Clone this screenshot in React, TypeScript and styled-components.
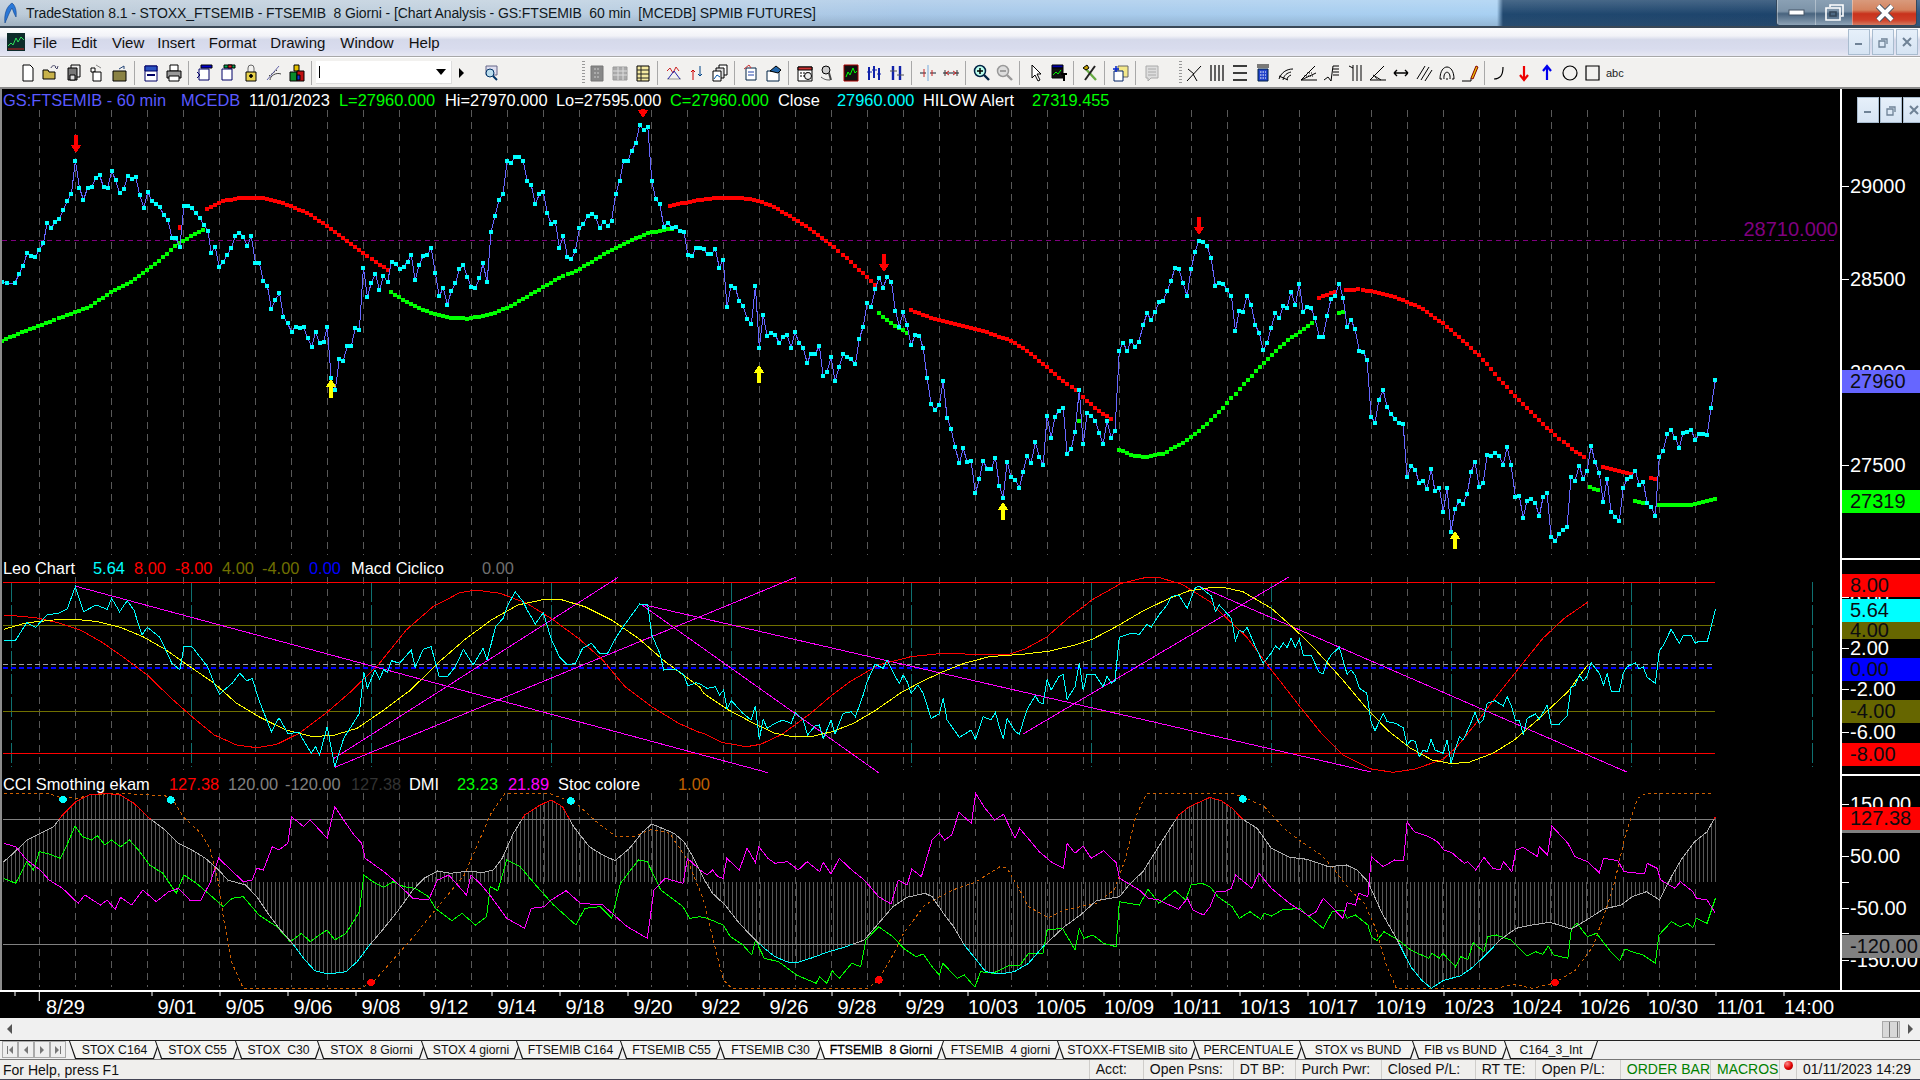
import React from 'react'
import styled, { createGlobalStyle } from 'styled-components'

type Pt = [number, number]

const FONT = `'Liberation Sans', Arial, sans-serif`

// points were read off crops of the chart, each crop has its own scale
const pts = (s: string, sx: number, ox: number, oy: number): Pt[] =>
  s.trim().split(/\s+/).map((p) => {
    const [x, y] = p.split(',').map(Number)
    return [ox + x / sx, oy + y / 3] as Pt
  })

const merge = (...parts: Pt[][]): Pt[] => {
  const out: Pt[] = []
  parts.forEach((part) => {
    part.forEach((p) => {
      if (!out.length || p[0] > out[out.length - 1][0]) out.push(p)
    })
  })
  return out
}

const A = (s: string) => pts(s, 2.24, 0, 100)
const B = (s: string) => pts(s, 2.8, 650, 100)
const C = (s: string) => pts(s, 2.8, 1200, 100)
const D = (s: string) => pts(s, 2.24, 0, 550)
const E = (s: string) => pts(s, 2.8, 650, 550)
const F = (s: string) => pts(s, 2.8, 1200, 550)

const poly = (p: Pt[]) => p.map(([x, y]) => `${x.toFixed(1)},${y.toFixed(1)}`).join(' ')

const yAt = (p: Pt[], x: number) => {
  if (x <= p[0][0]) return p[0][1]
  for (let i = 1; i < p.length; i++) {
    if (x <= p[i][0]) {
      const t = (x - p[i - 1][0]) / (p[i][0] - p[i - 1][0])
      return p[i - 1][1] + (p[i][1] - p[i - 1][1]) * t
    }
  }
  return p[p.length - 1][1]
}

const dots = (p: Pt[]): Pt[] => {
  const out: Pt[] = []
  for (let x = p[0][0]; x <= p[p.length - 1][0]; x += 4.02) out.push([x, yAt(p, x)])
  return out
}

const price = merge(
  A('5,545 15,550 33,550 43,522 52,497 61,458 70,468 79,470 88,450 97,430 106,368 115,385 124,365 133,357 142,330 151,302 160,282 169,182 178,264 187,300 196,264 205,262 214,235 223,226 232,262 241,264 250,214 259,240 268,280 277,268 286,228 295,238 304,230 313,285 322,323 331,275 340,302 349,312 358,322 367,345 376,360 385,413 394,414 403,440 412,317 421,317 430,325 439,340 448,355 457,375 466,392 473,460 482,440 491,500 500,485 509,465 518,445 527,408 536,398 545,410 554,438 563,408 572,488 581,490 590,542 599,558 608,627 617,600 626,580 635,650 644,670 653,695 662,680 671,685 680,680 689,715 698,740 707,697 716,730 725,727 733,680 742,835 751,870 760,776 769,783 778,737 787,738 796,683 805,690 814,503 823,590 832,548 841,522 850,570 859,527 868,547 877,485 886,492 895,507 904,500 913,485 921,465 930,540 939,495 948,467 957,465 966,443 975,520 984,588 993,563 1002,615 1011,573 1020,550 1029,508 1038,495 1047,530 1056,562 1065,565 1074,535 1082,490 1091,546 1100,395 1109,347 1118,300 1127,282 1136,182 1145,188 1154,170 1163,172 1172,183 1181,243 1190,255 1199,313 1208,283 1217,275 1226,340 1235,372 1244,365 1253,443 1262,407 1271,470 1280,478 1289,452 1298,385 1307,372 1316,347 1325,343 1334,350 1343,385 1352,365 1361,378 1370,362 1379,283 1388,243 1397,183 1406,183 1415,153 1424,130 1433,76 1442,90 1451,80 1460,243 1469,298 1478,312 1487,380 1496,368 1505,385 1514,380 1523,392 1532,396 1541,465 1550,468 1559,443 1568,443'),
  B('127,443 138,443 150,448 161,463 172,463 183,447 194,503 205,480 216,620 227,557 239,565 250,603 261,618 272,657 284,672 295,558 306,743 317,645 328,707 339,698 351,705 362,730 373,712 384,706 395,743 406,697 418,730 429,743 440,788 451,762 463,762 474,737 485,827 496,815 507,772 518,843 530,800 541,762 552,772 563,778 575,792 586,717 597,680 608,610 619,620 631,567 642,533 653,563 664,530 676,545 687,632 698,680 709,637 720,675 731,735 743,705 754,707 765,745 776,833 787,913 798,930 810,915 821,843 832,953 843,987 854,1040 866,1090 877,1045 888,1085 899,1082 911,1180 922,1138 933,1082 944,1106 955,1108 967,1073 978,1157 989,1193 1000,1085 1011,1132 1023,1140 1034,1163 1045,1115 1056,1067 1067,1088 1079,1027 1090,1070 1101,1095 1112,947 1123,1013 1134,950 1145,932 1157,923 1168,1062 1179,1047 1190,995 1202,870 1213,1032 1224,940 1235,947 1247,962 1258,1000 1269,1032 1280,962 1291,1013 1302,992 1314,753 1325,728 1336,753 1347,722 1358,741 1369,725 1381,675 1392,640 1403,660 1414,637 1425,607 1437,602 1448,573 1459,543 1470,503 1481,508 1492,548 1504,588 1515,507 1526,455 1537,422'),
  C('9,427 20,437 31,474 43,558 54,548 65,551 76,570 88,588 99,692 110,632 121,635 132,587 143,615 155,675 166,700 177,750 188,730 199,684 211,638 222,655 233,618 244,624 255,575 267,615 278,551 289,636 300,621 311,624 322,655 334,710 345,710 356,647 367,597 378,588 390,551 401,594 412,680 423,660 434,687 446,752 457,755 468,780 479,950 490,968 501,900 513,870 524,920 535,942 547,958 558,970 569,973 580,1132 591,1097 603,1110 614,1150 625,1143 636,1167 647,1108 658,1173 670,1163 681,1235 692,1163 703,1295 714,1227 726,1203 737,1212 748,1182 759,1116 770,1085 782,1162 793,1150 804,1065 815,1068 826,1058 838,1068 849,1095 860,1042 871,1095 883,1190 894,1188 905,1253 916,1202 927,1198 939,1210 950,1248 961,1190 972,1180 983,1310 995,1323 1006,1302 1017,1290 1028,1280 1039,1130 1050,1143 1062,1097 1073,1136 1084,1112 1095,1037 1106,1085 1118,1120 1129,1205 1140,1136 1151,1237 1163,1250 1174,1263 1185,1165 1196,1137 1207,1130 1219,1112 1230,1155 1241,1145 1252,1208 1263,1222 1275,1248 1286,1070 1297,1052 1308,1003 1319,990 1330,1013 1342,1043 1353,998 1364,995 1375,990 1387,1020 1398,1002 1409,1002 1420,1005 1431,923 1443,840'),
)

const greenDots: Pt[][] = [
  A('5,722 50,697 100,672 150,645 200,620 250,575 300,540 350,490 400,430 460,385'),
  A('875,577 910,605 950,632 1000,652 1050,656 1100,643 1150,615 1200,575 1250,537 1300,505 1350,465 1400,430 1450,400 1510,385'),
  B('640,640 680,675 722,700'),
  merge(B('1313,1049 1350,1066 1390,1072 1440,1060 1490,1030 1540,990 1568,965'), C('60,930 120,855 177,790 240,725 320,665')),
  C('388,640 402,635'),
  C('1093,1162 1120,1172'),
  C('1217,1203 1250,1210'),
  C('1285,1215 1370,1215 1400,1208 1445,1197'),
]

const redDots: Pt[][] = [
  A('463,326 500,302 545,293 590,295 640,312 690,340 735,380 780,425 830,475 870,512'),
  B('55,318 100,308 150,298 200,293 260,294 310,303 360,328 410,360 460,395 510,435 560,485 630,555'),
  B('730,630 790,655 860,675 930,692 1010,722 1060,755 1110,800 1160,845 1197,875'),
  B('1213,892 1260,935 1303,963'),
  C('333,594 380,575'),
  C('410,570 445,568 500,578 560,597 620,625 680,670 740,725 790,775 840,840 890,895 950,960 1000,1010 1050,1055 1085,1078'),
  C('1128,1100 1210,1122'),
  C('1262,1133 1275,1137'),
]

const signalArrows = [
  { x: 76, y1: 135, y2: 153, up: false },
  { x: 643, y1: 109, y2: 118, up: false },
  { x: 884, y1: 254, y2: 272, up: false },
  { x: 1199, y1: 217, y2: 235, up: false },
  { x: 331, y1: 379, y2: 398, up: true },
  { x: 759, y1: 365, y2: 383, up: true },
  { x: 1003, y1: 502, y2: 520, up: true },
  { x: 1455, y1: 531, y2: 549, up: true },
]

const macd = merge(
  D('8,271 35,271 60,218 80,232 105,195 130,190 150,178 169,110 187,185 215,165 240,178 250,145 268,185 285,152 300,180 318,255 330,232 358,262 385,340 403,360 412,290 430,290 465,350 480,400 492,432 520,400 537,370 553,392 565,385 580,450 608,545 625,503 645,550 670,548 697,610 707,590 716,615 733,530 750,650 770,565 805,490 815,365 823,415 840,360 850,388 860,358 868,368 877,332 895,340 921,300 930,352 948,298 966,290 984,380 1002,380 1020,350 1038,298 1060,345 1082,295 1091,330 1110,230 1127,205 1136,170 1154,125 1172,155 1181,180 1199,222 1217,188 1235,268 1253,320 1271,345 1289,340 1305,295 1325,280 1343,310 1361,310 1379,265 1397,228 1433,162 1451,165 1460,255 1478,310 1487,360 1514,358 1532,375 1541,408 1559,398 1568,402'),
  E('160,415 183,410 195,435 206,420 216,477 228,452 260,490 283,510 295,467 306,568 317,508 328,535 350,520 372,510 395,520 407,488 429,510 441,555 463,527 474,525 485,565 507,510 518,552 541,490 563,485 575,500 597,435 608,395 630,343 653,355 664,330 687,380 698,400 709,375 720,395 731,430 750,405 765,430 787,505 810,492 821,445 832,510 866,562 888,548 899,540 911,568 933,500 955,510 967,487 978,530 989,567 1000,505 1023,545 1034,553 1056,478 1079,437 1090,458 1101,460 1112,388 1123,420 1145,380 1157,373 1168,448 1190,410 1202,340 1213,420 1224,372 1247,375 1269,410 1280,378 1291,400 1302,392 1314,262 1325,258 1347,250 1370,253 1392,222 1403,232 1425,195 1448,165 1459,140 1481,135 1504,175 1526,115 1537,108 1568,135'),
  F('31,135 43,185 54,165 88,205 99,273 110,240 121,247 132,232 155,290 177,340 199,310 211,288 222,298 233,278 244,293 255,265 267,292 278,268 289,315 311,315 334,368 345,370 356,335 367,315 390,292 412,373 423,360 434,375 446,415 467,430 479,515 490,542 513,490 524,515 547,520 569,533 580,585 591,570 603,575 614,620 625,600 636,605 647,568 658,600 681,610 692,570 703,640 714,600 726,560 737,570 759,517 770,487 782,522 793,510 804,460 826,452 849,468 860,440 871,465 883,510 894,510 905,552 916,505 939,492 950,508 972,465 983,522 1006,522 1028,497 1039,410 1050,407 1062,375 1073,393 1084,378 1095,338 1118,370 1130,405 1140,370 1152,425 1174,425 1185,370 1196,350 1219,338 1230,357 1241,350 1252,382 1275,400 1286,303 1297,287 1319,238 1342,280 1353,258 1375,257 1387,280 1398,273 1420,276 1431,230 1443,178'),
)

const macdYellow = merge(
  D('8,238 60,218 120,210 170,208 220,215 270,232 320,260 370,298 420,345 480,400 530,460 580,500 640,540 700,560 750,555 800,535 860,480 920,420 980,340 1040,270 1100,210 1160,165 1220,148 1260,150 1310,170 1370,210 1430,265 1490,335 1568,412'),
  E('150,430 220,480 290,520 350,550 400,560 450,560 510,545 570,520 630,482 700,430 760,395 820,365 880,340 950,320 1050,312 1120,303 1190,285 1240,267 1310,227 1380,183 1450,147 1510,122 1568,113'),
  F('70,113 120,125 200,175 260,232 320,295 400,390 470,480 530,545 590,595 650,630 700,640 750,638 820,610 880,570 950,505 1030,425 1085,345'),
)

const macdRed = merge(
  D('8,198 30,197 80,203 130,218 180,240 230,278 280,325 330,375 380,440 430,500 480,555 530,585 575,593 620,583 670,550 730,490 790,420 850,340 910,240 970,170 1030,128 1065,120 1120,130 1180,160 1240,210 1300,270 1350,330 1400,410 1460,470 1520,520 1568,548'),
  E('150,550 200,577 270,590 310,583 370,553 450,490 510,435 560,395 640,345 730,320 820,310 910,313 1000,315 1050,297 1110,262 1170,205 1240,148 1320,100 1390,82 1430,84 1490,103 1568,155'),
  F('60,190 130,260 200,360 280,470 340,550 400,615 480,657 540,667 600,658 680,628 720,590 780,510 840,425 900,345 960,265 1020,205 1085,157'),
)

const trendLines: [number, number, number, number][] = [
  [75, 586, 768, 772.7],
  [332.6, 759.3, 618.3, 577.3],
  [334.8, 767.3, 795.7, 577.3],
  [640.6, 604, 1371, 772],
  [640.6, 604, 878.6, 772.7],
  [1023, 734, 1289, 577],
  [1200, 586.7, 1627.5, 772.3],
]

const cci = merge(
  D('8,935 30,910 60,870 90,850 120,830 140,795 170,755 200,735 235,730 270,735 300,760 335,805 370,840 400,880 430,900 460,925 490,960 510,990 550,1005 575,1040 600,1090 625,1135 655,1180 680,1225 705,1262 735,1272 775,1265 800,1235 825,1190 860,1135 890,1085 925,1020 950,985 980,963 1010,970 1050,963 1080,968 1105,960 1125,925 1150,850 1175,795 1210,765 1235,750 1260,770 1285,830 1320,890 1350,915 1378,932 1410,895 1440,845 1460,822 1510,850'),
  E('30,835 60,847 95,875 120,920 150,985 175,1030 210,1065 250,1120 290,1165 320,1195 350,1220 390,1238 410,1238 450,1225 500,1205 540,1193 600,1170 640,1120 680,1070 720,1042 770,1030 790,1040 825,1095 850,1130 880,1185 910,1225 940,1265 980,1272 1020,1265 1060,1240 1100,1190 1160,1130 1205,1095 1250,1052 1315,1040 1345,1000 1380,965 1430,880 1480,795 1510,770 1568,742'),
  F('30,743 60,752 90,775 120,808 160,835 200,895 250,922 300,928 360,950 410,945 440,960 470,995 510,1090 550,1165 590,1250 620,1290 648,1315 680,1292 730,1277 760,1255 800,1215 840,1170 885,1135 930,1125 980,1117 1040,1137 1090,1105 1130,1077 1180,1065 1210,1040 1250,1025 1287,1050 1320,980 1350,925 1385,875 1420,845 1443,800'),
)

const dmiPlus = merge(
  D('8,985 35,1000 60,935 75,960 88,905 110,912 135,925 150,885 168,828 185,860 205,870 218,857 235,885 250,870 270,890 290,870 310,900 335,945 365,970 395,1030 412,975 440,1000 475,1040 500,1070 520,1045 545,1040 580,1095 620,1130 650,1175 675,1150 695,1175 715,1155 733,1140 750,1170 775,1150 805,1085 815,975 835,995 860,1012 880,995 905,1010 930,1015 960,1040 975,1075 1012,1112 1035,1090 1065,1125 1090,1100 1098,1010 1115,1022 1135,930 1165,950 1200,1005 1240,1065 1290,1125 1310,1075 1345,1070 1370,1105 1390,1000 1430,930 1450,935 1480,1020 1530,1070 1545,1105 1568,1100'),
  E('160,1105 205,1125 225,1160 260,1185 285,1215 295,1170 320,1225 360,1235 410,1275 465,1300 475,1280 495,1300 510,1262 530,1285 565,1240 590,1250 605,1170 640,1130 680,1160 710,1195 745,1220 765,1212 790,1250 810,1275 820,1240 860,1285 880,1275 910,1312 925,1265 960,1270 1005,1247 1035,1247 1060,1210 1100,1210 1112,1140 1155,1135 1190,1200 1202,1135 1215,1165 1240,1155 1270,1180 1305,1190 1314,1055 1370,1065 1395,1018 1425,1060 1470,1022 1500,1050 1515,1005 1545,1000 1568,1010'),
  F('50,1040 90,1070 110,1105 140,1085 170,1108 180,1090 200,1098 230,1080 250,1078 280,1075 300,1095 345,1135 370,1085 400,1080 412,1105 435,1095 470,1125 480,1160 495,1172 515,1145 555,1170 590,1200 640,1225 650,1210 670,1225 680,1210 715,1250 730,1220 750,1228 765,1178 795,1205 805,1160 830,1155 870,1170 915,1218 940,1205 960,1213 975,1188 990,1215 1030,1225 1040,1135 1055,1120 1085,1160 1110,1150 1150,1205 1175,1232 1190,1197 1210,1205 1240,1215 1275,1240 1285,1155 1320,1115 1345,1130 1365,1120 1380,1133 1390,1105 1420,1120 1443,1045'),
)

const dmiMinus = merge(
  D('8,880 35,890 60,930 90,960 110,990 140,1015 175,1060 190,1035 225,1065 240,1050 258,1078 270,1042 295,1065 320,1020 350,1055 378,1025 400,1015 425,1050 450,1050 470,1000 490,925 545,995 565,990 575,955 590,960 610,890 625,900 645,880 653,800 680,830 695,810 733,865 750,770 790,850 810,880 818,925 860,965 890,1000 925,1045 960,1050 980,990 1005,975 1045,1035 1055,975 1075,1000 1100,1040 1135,1105 1175,1135 1190,1075 1220,1070 1235,1050 1268,1022 1300,1060 1350,1065 1405,1130 1450,1165 1465,1020 1490,985 1530,1000 1540,925 1568,960'),
  E('160,975 175,960 190,980 205,985 215,925 250,960 272,895 295,938 305,890 330,925 350,940 385,935 415,960 440,935 475,965 485,937 507,972 530,925 565,960 600,990 640,1040 675,1062 695,990 720,1005 733,957 760,980 790,870 810,848 825,870 845,855 865,787 900,820 912,730 935,770 965,810 990,793 1022,865 1035,835 1090,905 1125,937 1158,955 1168,880 1190,910 1213,888 1235,925 1270,902 1305,938 1315,985 1370,1020 1395,1045 1425,1050 1480,1078 1505,1045 1520,1080 1550,1095 1568,1070'),
  F('45,1025 70,1025 88,1015 100,975 145,1015 165,970 200,1015 250,1060 305,1098 325,1085 345,1045 400,1105 412,1058 435,1065 445,1030 470,1040 480,920 513,950 545,930 570,933 580,815 600,845 640,860 665,875 683,900 705,908 740,940 750,935 772,960 795,922 820,955 840,960 850,935 873,965 885,900 905,892 945,920 950,890 973,915 985,828 1030,880 1050,920 1085,935 1118,968 1130,925 1170,932 1187,965 1245,972 1252,940 1280,955 1290,990 1330,1015 1345,995 1380,1025 1390,1045 1420,1050 1443,1090'),
)

const stoc = merge(
  D('8,730 105,730 135,742 175,745 200,735 260,730 370,737 390,755 410,800 450,850 470,895 490,1000 500,1100 520,1240 545,1315 810,1315 840,1290 920,1170 975,1080 1040,975 1100,790 1130,732 1230,730 1290,760 1340,820 1380,860 1420,860 1460,838 1500,850 1540,930'),
  E('150,1050 175,1160 205,1290 230,1315 610,1315 640,1290 680,1215 710,1150 770,1065 820,1035 860,1015 910,997 980,950 1000,955 1030,1010 1060,1070 1115,1103 1160,1080 1250,1060 1300,1020 1330,930 1360,800 1390,732 1568,730'),
  F('90,730 130,745 180,770 240,840 290,880 340,915 370,950 420,1020 460,1060 490,1130 520,1240 550,1315 830,1315 880,1303 930,1315 990,1300 1050,1262 1100,1190 1130,1100 1160,1000 1190,860 1225,745 1250,730 1440,730'),
)

const cciMarks = [
  { x: 63, y: 799.5, c: '#00ffff' },
  { x: 171, y: 800, c: '#00ffff' },
  { x: 571, y: 801, c: '#00ffff' },
  { x: 1243, y: 799, c: '#00ffff' },
  { x: 371, y: 982.5, c: '#ff0000' },
  { x: 879, y: 980, c: '#ff0000' },
  { x: 1555, y: 982.5, c: '#ff0000' },
]

const gridX = Array.from({ length: 47 }, (_, i) => 39.3 + i * 36)
const histX = Array.from({ length: 428 }, (_, i) => 3 + i * 4.01)
const macdTealX = [11, 191.5, 371.4, 551.3, 731.4, 911.4, 1091.4, 1271.4, 1451.4, 1631.4, 1812]

const GlobalStyle = createGlobalStyle`
  html, body { margin: 0; padding: 0; background: #000; }
  #root { width: 1920px; height: 1080px; overflow: hidden; }
`

const Page = styled.div`
  width: 1920px;
  height: 1080px;
  display: flex;
  flex-direction: column;
  font-family: ${FONT};
  background: #f0f0f0;
  overflow: hidden;
`

const TitleBar = styled.div`
  flex: 0 0 28px;
  box-sizing: border-box;
  display: flex;
  align-items: center;
  padding-left: 3px;
  border-bottom: 2px solid #3a4856;
  background:
    linear-gradient(180deg, rgba(255, 255, 255, 0.18), rgba(255, 255, 255, 0) 55%, rgba(70, 90, 110, 0.22)),
    linear-gradient(90deg, #bccbd9 0, #c0d0de 500px, #a8c8e8 900px, #a8d0f2 1497px, #20486f 1503px, #1d446c 1780px, #2c5680 1920px);
`

const TitleText = styled.span`
  margin-left: 8px;
  font-size: 14px;
  letter-spacing: -0.1px;
  color: #101820;
  white-space: pre;
`

const WinButtons = styled.div`
  margin-left: auto;
  margin-right: 3px;
  height: 25px;
  align-self: flex-start;
  display: flex;
  border: 1px solid #33475c;
  border-top: 0;
  border-radius: 0 0 4px 4px;
  overflow: hidden;
`

const WinButton = styled.div<{ $w: number; $close?: boolean }>`
  width: ${(p) => p.$w}px;
  display: flex;
  align-items: center;
  justify-content: center;
  border-left: 1px solid rgba(255, 255, 255, 0.35);
  background: ${(p) =>
    p.$close
      ? 'linear-gradient(180deg, #d99a7c 0, #d4835f 40%, #c8321c 55%, #cf3f28 80%, #d07a60 100%)'
      : 'linear-gradient(180deg, #8aa0b4 0, #7c93a8 45%, #48637e 55%, #8ea3b6 100%)'};
`

const MenuBar = styled.div`
  flex: 0 0 29px;
  box-sizing: border-box;
  display: flex;
  align-items: center;
  padding-left: 7px;
  border-bottom: 1px solid #a8a8a8;
  background: linear-gradient(180deg, #fcfcfd 0, #f2f3f8 28%, #d5d9ea 42%, #d9dcee 75%, #e7e8f3 100%);
`

const MenuItem = styled.span<{ $ml: number }>`
  margin-left: ${(p) => p.$ml}px;
  font-size: 15px;
  color: #111;
`

const MdiButtons = styled.div`
  margin-left: auto;
  margin-right: 2px;
  display: flex;
  gap: 2px;
`

const MdiButton = styled.div`
  width: 22px;
  height: 26px;
  box-sizing: border-box;
  display: flex;
  align-items: center;
  justify-content: center;
  background: linear-gradient(180deg, #e6f0fa, #d6e4f3);
  border: 1px solid #a9bccf;
`

const ChartMdi = styled.div`
  position: absolute;
  top: 8px;
  right: -5px;
  display: flex;
  gap: 1px;
  z-index: 4;
`

const Toolbar = styled.div`
  flex: 0 0 32px;
  box-sizing: border-box;
  display: flex;
  align-items: center;
  padding-left: 16px;
  background: #f2f1ef;
  border-bottom: 2px solid #8a8a8a;
  border-top: 1px solid #fff;
`

const ToolCell = styled.div`
  flex: 0 0 23px;
  height: 22px;
  display: flex;
  align-items: center;
  justify-content: center;
`

const ToolSep = styled.div`
  flex: 0 0 8px;
  height: 24px;
  position: relative;
  &::before {
    content: '';
    position: absolute;
    left: 3px;
    top: 0;
    bottom: 0;
    width: 1px;
    background: #a8a8a8;
  }
`

const Grip = styled.div<{ $ml: number }>`
  flex: 0 0 3px;
  height: 24px;
  margin-left: ${(p) => p.$ml}px;
  background: repeating-linear-gradient(180deg, #999 0 1px, transparent 1px 3px);
`

const Combo = styled.div`
  flex: 0 0 136px;
  height: 23px;
  box-sizing: border-box;
  display: flex;
  align-items: center;
  justify-content: space-between;
  padding: 0 5px 0 3px;
  background: #fff;
  border-right: 1px solid #ddd;
  border-bottom: 1px solid #ddd;
`

const ComboCaret = styled.span`
  width: 1px;
  height: 12px;
  background: #000;
`

const ComboArrow = styled.span`
  border-left: 5px solid transparent;
  border-right: 5px solid transparent;
  border-top: 6px solid #000;
`

const SideArrow = styled.span`
  flex: 0 0 auto;
  margin: 0 15px 0 7px;
  border-top: 5px solid transparent;
  border-bottom: 5px solid transparent;
  border-left: 5px solid #000;
`

const ChartWindow = styled.div`
  flex: 0 0 929px;
  min-height: 0;
  display: flex;
  flex-direction: column;
  background: #000;
`

const Pane = styled.div<{ $h: number }>`
  flex: 0 0 ${(p) => p.$h}px;
  display: flex;
  position: relative;
`

const Plot = styled.div`
  position: relative;
  flex: 0 0 1840px;
  width: 1840px;
  box-sizing: border-box;
  overflow: hidden;
`

const PlotSvg = styled.svg`
  display: block;
  width: 1840px;
  height: 100%;
  shape-rendering: crispEdges;
`

const LeftEdge = styled.div`
  position: absolute;
  left: 0;
  top: 0;
  bottom: 0;
  width: 2px;
  background: #8c8c8c;
`

const Legend = styled.div<{ $top: number }>`
  position: absolute;
  left: 3px;
  top: ${(p) => p.$top}px;
  display: flex;
  font-size: 16.4px;
  line-height: 20px;
  white-space: pre;
`

const LegendItem = styled.span<{ $w: number; $c: string }>`
  flex: 0 0 ${(p) => p.$w}px;
  color: ${(p) => p.$c};
`

const AlertLevel = styled.span`
  position: absolute;
  right: 2px;
  top: 129px;
  font-size: 20px;
  line-height: 22px;
  color: #800080;
`

const Axis = styled.div<{ $top?: boolean }>`
  position: relative;
  flex: 1;
  box-sizing: border-box;
  border-left: 2px solid #fff;
  border-top: ${(p) => (p.$top ? '2px solid #fff' : '0')};
  overflow: hidden;
`

const AxisLabel = styled.div<{ $y: number; $bg?: string; $h?: number }>`
  position: absolute;
  left: 0;
  right: 0;
  top: ${(p) => p.$y - (p.$h ?? 23) / 2}px;
  height: ${(p) => p.$h ?? 23}px;
  line-height: ${(p) => p.$h ?? 23}px;
  padding-left: 8px;
  font-size: 20px;
  white-space: nowrap;
  color: ${(p) => (p.$bg ? '#0c0c10' : '#fff')};
  background: ${(p) => p.$bg ?? 'transparent'};
  &::before {
    content: '';
    display: ${(p) => (p.$bg ? 'none' : 'block')};
    position: absolute;
    left: 0;
    top: 50%;
    width: 7px;
    height: 1px;
    background: #fff;
  }
`

const DateAxis = styled.div`
  position: relative;
  flex: 0 0 28px;
  box-sizing: border-box;
  overflow: hidden;
  border-top: 2px solid #fff;
  display: flex;
  padding-left: 31.5px;
  color: #fff;
  font-size: 20px;
  line-height: 30px;
`

const DateTicks = styled.svg`
  position: absolute;
  left: 0;
  top: 0;
  width: 1920px;
  height: 10px;
`

const DateLabel = styled.span`
  flex: 0 0 68px;
  text-align: center;
  &:first-of-type {
    margin-right: 43.5px;
  }
`

const ScrollBar = styled.div`
  flex: 0 0 22px;
  box-sizing: border-box;
  display: flex;
  align-items: center;
  background: #f0f0f0;
  padding: 0 7px;
`

const ScrollThumb = styled.div`
  margin-left: auto;
  margin-right: 8px;
  width: 18px;
  height: 17px;
  box-sizing: border-box;
  background: repeating-linear-gradient(90deg, #d8d8d8 0 6px, #777 6px 7px, #d8d8d8 7px 8px) 0 0 / 100% 100%;
  border: 1px solid #aaa;
`

const ScrollArrow = styled.span<{ $dir: 'left' | 'right' }>`
  border-top: 5px solid transparent;
  border-bottom: 5px solid transparent;
  ${(p) => (p.$dir === 'left' ? 'border-right: 5px solid #555;' : 'border-left: 5px solid #555;')}
`

const TabStrip = styled.div`
  flex: 0 0 19px;
  box-sizing: border-box;
  display: flex;
  padding-left: 2px;
  background: #f0f0f0;
  border-top: 1px solid #222;
`

const TabNavBtn = styled.div`
  flex: 0 0 16px;
  height: 17px;
  box-sizing: border-box;
  display: flex;
  align-items: center;
  justify-content: center;
  border: 1px solid #aaa;
  background: #eee;
`

const TabSpacer = styled.div`
  flex: 0 0 3px;
`

const Tab = styled.div<{ $w: number; $active?: boolean }>`
  flex: 0 0 ${(p) => p.$w}px;
  position: relative;
  margin-right: -5px;
  height: 18px;
  display: flex;
  align-items: center;
  justify-content: center;
  font-size: 12.2px;
  white-space: pre;
  color: #111;
  background: #111;
  clip-path: polygon(0 0, 100% 0, calc(100% - 6px) 100%, 6px 100%);
  z-index: ${(p) => (p.$active ? 2 : 1)};
  &::before {
    content: '';
    position: absolute;
    inset: 0 1px 1px 1px;
    background: ${(p) => (p.$active ? '#fff' : '#f4f4f2')};
    clip-path: polygon(0 0, 100% 0, calc(100% - 6px) 100%, 6px 100%);
  }
`

const TabText = styled.span<{ $active?: boolean }>`
  position: relative;
  ${(p) => (p.$active ? '-webkit-text-stroke: 0.3px #000; color: #000;' : '')}
`

const StatusBar = styled.div`
  flex: 1;
  min-height: 0;
  box-sizing: border-box;
  display: flex;
  align-items: center;
  font-size: 14px;
  color: #111;
  background: #f0efed;
  border-top: 1px solid #777;
  border-bottom: 1px solid #445;
`

const StatusHelp = styled.span`
  flex: 1;
  padding-left: 3px;
`

const StatusCell = styled.div<{ $w: number; $c?: string }>`
  flex: 0 0 ${(p) => p.$w}px;
  box-sizing: border-box;
  height: 19px;
  line-height: 19px;
  padding-left: 6px;
  white-space: nowrap;
  color: ${(p) => p.$c ?? '#111'};
  border-left: 1px solid #cfcdca;
`

const StatusBall = styled.div`
  flex: 0 0 17px;
  height: 19px;
  box-sizing: border-box;
  border-left: 1px solid #cfcdca;
  display: flex;
  justify-content: center;
  padding-top: 1px;
  &::after {
    content: '';
    width: 9px;
    height: 9px;
    border-radius: 50%;
    background: radial-gradient(circle at 35% 30%, #ff8a8a, #e00000 55%, #700 100%);
  }
`

const Ico = ({ children }: { children: React.ReactNode }) => (
  <svg width="20" height="20" viewBox="0 0 20 20" fill="none" stroke="#000" strokeWidth="1">
    {children}
  </svg>
)

const toolIcons: Record<string, React.ReactNode> = {
  doc: <path d="M5 2h7l3 3v13H5z" fill="#fff" />,
  open: <><path d="M2 16V7h5l1 2h6v7z" fill="#c8b24a" /><path d="M10 5c1-3 4-3 5-1l-1 0 2 2 1-3" stroke="#446" /></>,
  saveAll: <><path d="M7 2h9v12H7z" fill="#eee" /><path d="M4 5h9v12H4z" fill="#777" /><path d="M6 12h5v5H6z" fill="#ddd" /></>,
  props: <><path d="M4 5h4v4H4z" fill="#fff" /><path d="M6 9h8v9H6z" fill="#fff" /><path d="M9 2l5 3" stroke="#888" /></>,
  box: <><path d="M3 8h13v10H3z" fill="#8a8244" /><path d="M9 6l5-3M14 3v3" stroke="#247" /></>,
  preview: <><path d="M4 3h12v15H4z" fill="#fff" stroke="#006" /><path d="M4 3h12v5H4z" fill="#2a52c0" stroke="#006" /><path d="M6 12h8" stroke="#006" strokeWidth="2" /></>,
  print: <><path d="M6 2h8v6H6z" fill="#fff" /><path d="M3 8h14v7H3z" fill="#999" /><path d="M5 13h10v5H5z" fill="#fff" /></>,
  winA: <><path d="M6 2h11v3H6z" fill="#00c" /><path d="M4 6h10v11H4z" fill="#fff" stroke="#006" /><path d="M2 9l3 3-3 3" stroke="#006" /></>,
  winB: <><path d="M6 2h11v3H6z" fill="#0a5" /><path d="M10 2h4v3h-4z" fill="#d22" /><path d="M4 6h10v11H4z" fill="#fff" stroke="#006" /></>,
  lock: <><path d="M7 9V5a3 3 0 0 1 6 0v4" stroke="#666" /><path d="M5 9h10v9H5z" fill="#e8d24c" /><circle cx="10" cy="13" r="1.4" fill="#000" /></>,
  dish: <><path d="M3 17L15 3" stroke="#66a" /><path d="M6 17c0-4 6-8 11-6" stroke="#444" /><path d="M5 13l8-6" strokeDasharray="1 2" /></>,
  cubes: <><path d="M7 2h5v6H7z" fill="#e6c200" /><path d="M3 9h7v9H3z" fill="#0a8a2a" /><path d="M10 8h7v10h-7z" fill="#c01010" /><path d="M10 12h3v5h-3z" fill="#1030d0" /></>,
  search: <><path d="M5 3h11v9H5z" fill="#dde" stroke="#668" /><circle cx="9" cy="10" r="4" fill="#bde" stroke="#036" /><path d="M12 13l4 4" stroke="#036" strokeWidth="2" /></>,
  grayCalc: <><path d="M4 3h12v15H4z" fill="#888" stroke="#777" /><path d="M7 6h6M7 10h6M7 14h6" stroke="#ccc" strokeDasharray="2 1" /></>,
  grayTable: <><path d="M3 4h14v13H3z" fill="#aaa" stroke="#999" /><path d="M3 8h14M3 12h14M8 4v13M13 4v13" stroke="#ddd" /></>,
  yellowTable: <><path d="M4 3h12v15H4z" fill="#f4e9a0" /><path d="M4 7h12M4 11h12M4 15h12M8 3v15" stroke="#222" /></>,
  triPlot: <><path d="M3 16h14" stroke="#999" /><path d="M3 8l3-3 3 5 3-6 3 4" stroke="#c22" /><path d="M4 16l6-8 6 8" stroke="#22a" /></>,
  arrowsV: <><path d="M6 17V7M4 9l2-2 2 2" stroke="#c00" /><path d="M13 3v10M11 11l2 2 2-2" stroke="#048" /></>,
  layers: <><path d="M9 2h8v10H9z" fill="#fff" /><path d="M6 5h8v10H6z" fill="#ddd" /><path d="M3 8h8v10H3z" fill="#fff" /><path d="M4 16l3-4 3 2" stroke="#05a" /></>,
  tickets: <><path d="M5 5h10v12H5z" fill="#fff" stroke="#024" /><path d="M7 9h6M7 12h6" stroke="#24a" /><path d="M3 6l5-4 2 3" stroke="#c33" /></>,
  ticketsB: <><path d="M3 8h12v10H3z" fill="#fff" stroke="#024" /><path d="M6 8l6-5 5 4-3 3z" fill="#26a" /></>,
  calendar: <><path d="M3 4h14v14H3z" fill="#fff" /><path d="M3 4h14v3H3z" fill="#c33" /><path d="M5 10h10M5 13h6" strokeDasharray="2 1" /><circle cx="13" cy="13" r="3.5" fill="#eee" /></>,
  magGreen: <><circle cx="8" cy="7" r="4" fill="#ccc" /><path d="M11 10l2 7" stroke="#444" strokeWidth="2" /><path d="M3 14c4 3 6 3 9 3" stroke="#555" /></>,
  chartBlack: <><path d="M3 2h14v16H3z" fill="#111" stroke="#a00" /><path d="M5 14l2-5 2 3 3-7 2 5 2-2" stroke="#0f0" /></>,
  noteBlue: <><path d="M5 4v13M10 3v12M15 5v12" stroke="#12a" strokeWidth="2" /><path d="M3 9h5M8 7h5M13 11h4" stroke="#12a" /></>,
  noteBlueB: <><path d="M6 3v14M13 3v14" stroke="#12a" strokeWidth="2.4" /><path d="M3 8h7M10 12h7" stroke="#555" /></>,
  spread: <><path d="M2 10h6M12 10h6" stroke="#123" /><path d="M10 2v16" stroke="#7ad" /><path d="M6 6v8M14 7v6" stroke="#c22" /></>,
  spreadB: <><path d="M2 10h16" stroke="#123" /><path d="M4 7v6M16 7v6" stroke="#333" /><path d="M8 8l-3 2 3 2M12 8l3 2-3 2" stroke="#c22" /></>,
  zoomIn: <><circle cx="8" cy="8" r="5.5" fill="#bfe" stroke="#024" strokeWidth="1.5" /><path d="M8 5v6M5 8h6" stroke="#000" strokeWidth="1.5" /><path d="M12 12l5 5" strokeWidth="2.4" stroke="#024" /></>,
  zoomOut: <><circle cx="8" cy="8" r="5.5" fill="#ddd" stroke="#999" strokeWidth="1.5" /><path d="M5 8h6" stroke="#888" strokeWidth="1.5" /><path d="M12 12l5 5" strokeWidth="2.4" stroke="#999" /></>,
  cursor: <path d="M6 2l0 13 3-3 3 6 2-1-3-6 4 0z" fill="#fff" />,
  chartT: <><path d="M3 2h11v3H3z" fill="#00a" /><path d="M3 5h11v10H3z" fill="#111" /><path d="M4 12l3-3 2 2 3-4" stroke="#0f0" /><path d="M12 11h6M15 11v7" strokeWidth="2" /></>,
  tools: <><path d="M4 4l12 13" stroke="#6a4" strokeWidth="2.4" /><path d="M15 3L5 17" stroke="#222" strokeWidth="2" /><path d="M3 5l4-3 2 3-3 2z" fill="#c6a000" /></>,
  checklist: <><path d="M7 3h10v11H7z" fill="#f4e88a" stroke="#666" /><path d="M3 8h9v10H3z" fill="#fff" stroke="#026" /><path d="M5 3v6M2 6h6" stroke="#02c" strokeWidth="1.5" /></>,
  grayNote: <><path d="M4 3h12v12H9l-3 3v-3H4z" fill="#ddd" stroke="#aaa" /><path d="M6 6h8M6 9h8M6 12h8" stroke="#aaa" /></>,
  fork: <><path d="M3 18L17 3" /><path d="M9 11l4 7M4 6l6 5" /></>,
  vlines: <path d="M4 2v16M8 2v16M12 2v16M16 2v16" strokeWidth="1.2" />,
  hlines: <path d="M3 3h14M3 10h14M3 17h14" strokeWidth="1.4" />,
  calc: <><path d="M4 2h12M4 4h12" /><path d="M5 6h10v12H5z" fill="#24c" stroke="#024" /><path d="M7 9h6M7 12h6M7 15h6" stroke="#fff" strokeDasharray="1.5 1" /></>,
  arcs: <path d="M3 16c2-6 7-10 14-10M7 17c1-5 4-7 8-8M11 17c0-3 2-4 4-5M3 13l9 4" />,
  fan: <><path d="M2 17h16M2 17L16 3M2 17L17 10" /><path d="M5 13h10M8 10h6" strokeDasharray="1 1" /></>,
  fib: <><path d="M2 17l4-3 3 4 2-15" /><path d="M11 3h6M11 6h6M11 9h6M11 12h6" strokeWidth="1.2" /></>,
  vfib: <path d="M4 3l4 2v13M12 2v16M16 2v16M8 2v3" />,
  gannFan: <><path d="M2 17h16M2 17L16 3M5 12l8 5" /><path d="M7 14l3 3" strokeDasharray="1 1" /></>,
  hArrow: <path d="M3 10h14M3 10l3-3M3 10l3 3M17 10l-3-3M17 10l-3 3" strokeWidth="1.4" />,
  parallel: <path d="M3 16L11 3M7 17L15 4M11 18L18 7" />,
  fanBell: <><path d="M3 16c0-16 14-16 14 0" /><path d="M3 16h2M7 16c-1-9 7-9 6 0M15 16h2M9 16h2" /></>,
  pencil: <><path d="M2 18h9V15" /><path d="M11 15l5-12 2 1-5 12z" fill="#e8c000" stroke="#800" /></>,
  curve: <path d="M3 16c5 0 9-2 9-12" strokeWidth="1.2" />,
  redDown: <path d="M10 3v14M6 12l4 5 4-5" stroke="#e00" strokeWidth="2.2" />,
  blueUp: <path d="M10 17V3M6 8l4-5 4 5" stroke="#00e" strokeWidth="2.2" />,
  circle: <circle cx="10" cy="10" r="7" strokeWidth="1.2" />,
  square: <path d="M3 3h13v14H3z" strokeWidth="1.2" />,
}

const abc = <svg width="22" height="20" viewBox="0 0 22 20"><text x="1" y="14" fontSize="11" fontFamily="Liberation Sans" fill="#222">abc</text></svg>

const Tools = ({ names }: { names: string[] }) => (
  <>
    {names.map((n, i) => (
      <ToolCell key={n + i}>{n === 'abc' ? abc : <Ico>{toolIcons[n]}</Ico>}</ToolCell>
    ))}
  </>
)

const toolbarGroups: string[][] = [
  ['grayCalc', 'grayTable', 'yellowTable'],
  ['triPlot', 'arrowsV', 'layers'],
  ['tickets', 'ticketsB'],
  ['calendar', 'magGreen', 'chartBlack', 'noteBlue', 'noteBlueB'],
  ['spread', 'spreadB'],
  ['zoomIn', 'zoomOut'],
  ['cursor', 'chartT'],
  ['tools'],
  ['checklist'],
  ['grayNote'],
]

type LegendEntry = [string, string, number]

const priceLegend: LegendEntry[] = [
  ['GS:FTSEMIB - 60 min', '#5a5aff', 0],
  ['MCEDB', '#5a5aff', 178],
  ['11/01/2023', '#fff', 246],
  ['L=27960.000', '#00ff00', 336],
  ['Hi=27970.000', '#fff', 442],
  ['Lo=27595.000', '#fff', 553],
  ['C=27960.000', '#00ff00', 667],
  ['Close', '#fff', 775],
  ['27960.000', '#00ffff', 834],
  ['HILOW Alert', '#fff', 920],
  ['27319.455', '#00ff00', 1029],
]

const macdLegend: LegendEntry[] = [
  ['Leo Chart', '#fff', 0],
  ['5.64', '#00ffff', 90],
  ['8.00', '#ff0000', 131],
  ['-8.00', '#ff0000', 172],
  ['4.00', '#707000', 219],
  ['-4.00', '#707000', 259],
  ['0.00', '#0000ff', 306],
  ['Macd Ciclico', '#fff', 348],
  ['0.00', '#707070', 479],
]

const cciLegend: LegendEntry[] = [
  ['CCI Smothing ekam', '#fff', 0],
  ['127.38', '#ff0000', 166],
  ['120.00', '#808080', 225],
  ['-120.00', '#808080', 282],
  ['127.38', '#333333', 348],
  ['DMI', '#fff', 406],
  ['23.23', '#00ff00', 454],
  ['21.89', '#ff00ff', 505],
  ['Stoc colore', '#fff', 555],
  ['1.00', '#c06000', 675],
]

const LegendRow = ({ items, top }: { items: LegendEntry[]; top: number }) => (
  <Legend $top={top}>
    {items.map(([text, color, at], i) => (
      <LegendItem key={text + i} $c={color} $w={(items[i + 1]?.[2] ?? at + 80) - at}>
        {text}
      </LegendItem>
    ))}
  </Legend>
)

const DashedGrid = ({ y1, y2 }: { y1: number; y2: number }) => (
  <g stroke="#585858" strokeWidth="1" strokeDasharray="7 5">
    {gridX.map((x) => (
      <line key={x} x1={x} x2={x} y1={y1} y2={y2} />
    ))}
  </g>
)

const PricePlot = () => (
  <PlotSvg viewBox="0 89 1840 469" preserveAspectRatio="none">
    <DashedGrid y1={110} y2={555} />
    <line x1="2" x2="1836" y1="240.7" y2="240.7" stroke="#800080" strokeWidth="1" strokeDasharray="5 4" />
    {greenDots.map((seg, i) => (
      <g key={i} fill="#00ff00">
        {dots(seg).map(([x, y]) => (
          <rect key={x} x={x - 2} y={y - 2} width="4" height="4" />
        ))}
      </g>
    ))}
    {redDots.map((seg, i) => (
      <g key={i} fill="#ff0000">
        {dots(seg).map(([x, y]) => (
          <rect key={x} x={x - 2} y={y - 2} width="4" height="4" />
        ))}
      </g>
    ))}
    <polyline points={poly(price)} fill="none" stroke="#6666ff" strokeWidth="1" />
    {price.map(([x, y]) => (
      <rect key={x} x={x - 2} y={y - 2} width="4" height="4" fill="#00ffff" />
    ))}
    <rect x="178" y="225" width="3" height="5" fill="#f00" />
    <rect x="1077" y="419" width="4" height="4" fill="#00ff00" />
    {signalArrows.map((a) => {
      const c = a.up ? '#ffff00' : '#ff0000'
      const tip = a.up ? a.y1 : a.y2
      const base = a.up ? a.y1 + 8 : a.y2 - 8
      const tail = a.up ? a.y2 : a.y1
      return (
        <g key={a.x}>
          <rect x={a.x - 2} y={Math.min(base, tail)} width="4" height={Math.abs(base - tail)} fill={c} />
          <polygon points={`${a.x},${tip} ${a.x - 5.5},${base} ${a.x + 5.5},${base}`} fill={c} />
        </g>
      )
    })}
  </PlotSvg>
)

const MacdPlot = () => (
  <PlotSvg viewBox="0 558 1840 216" preserveAspectRatio="none">
    <DashedGrid y1={577} y2={770} />
    <g stroke="#0f7070" strokeWidth="1" strokeDasharray="20 3">
      {macdTealX.map((x) => (
        <line key={x} x1={x} x2={x} y1="582" y2="767" />
      ))}
    </g>
    <g strokeWidth="1">
      <line x1="3" x2="1715" y1="582.3" y2="582.3" stroke="#ff0000" />
      <line x1="3" x2="1715" y1="753.3" y2="753.3" stroke="#ff0000" />
      <line x1="3" x2="1715" y1="625.7" y2="625.7" stroke="#707000" />
      <line x1="3" x2="1715" y1="711.3" y2="711.3" stroke="#707000" />
      <line x1="3" x2="1715" y1="664.3" y2="664.3" stroke="#a0a0a0" strokeDasharray="5 3" />
      <line x1="3" x2="1715" y1="668.3" y2="668.3" stroke="#0000ff" strokeWidth="2" strokeDasharray="5 3" />
    </g>
    {trendLines.map(([x1, y1, x2, y2]) => (
      <line key={x1 + x2} x1={x1} y1={y1} x2={x2} y2={y2} stroke="#ff00ff" strokeWidth="1" />
    ))}
    <polyline points={poly(macdRed)} fill="none" stroke="#ff0000" strokeWidth="1" />
    <polyline points={poly(macdYellow)} fill="none" stroke="#ffff00" strokeWidth="1" />
    <polyline points={poly(macd)} fill="none" stroke="#00ffff" strokeWidth="1" />
  </PlotSvg>
)

const CciPlot = () => (
  <PlotSvg viewBox="0 774 1840 216" preserveAspectRatio="none">
    <defs>
      <clipPath id="cci-top"><rect x="0" y="774" width="1840" height="45.3" /></clipPath>
      <clipPath id="cci-mid"><rect x="0" y="819.3" width="1840" height="125" /></clipPath>
      <clipPath id="cci-low"><rect x="0" y="944.3" width="1840" height="46" /></clipPath>
    </defs>
    <DashedGrid y1={793} y2={987} />
    <g stroke="#585858" strokeWidth="1">
      {histX.map((x) => (
        <line key={x} x1={x} x2={x} y1="882.3" y2={yAt(cci, x)} />
      ))}
    </g>
    <line x1="3" x2="1715" y1="819.3" y2="819.3" stroke="#808080" strokeWidth="1" />
    <line x1="3" x2="1715" y1="944.3" y2="944.3" stroke="#808080" strokeWidth="1" />
    <polyline points={poly(stoc)} fill="none" stroke="#d06000" strokeWidth="1" strokeDasharray="3 3" />
    <polyline points={poly(dmiPlus)} fill="none" stroke="#00ff00" strokeWidth="1" />
    <polyline points={poly(dmiMinus)} fill="none" stroke="#ff00ff" strokeWidth="1" />
    <polyline points={poly(cci)} fill="none" stroke="#b0b0b0" strokeWidth="1" clipPath="url(#cci-mid)" />
    <polyline points={poly(cci)} fill="none" stroke="#ff0000" strokeWidth="1" clipPath="url(#cci-top)" />
    <polyline points={poly(cci)} fill="none" stroke="#00ffff" strokeWidth="1" clipPath="url(#cci-low)" />
    {cciMarks.map((m) => (
      <circle key={m.x} cx={m.x} cy={m.y} r="3.7" fill={m.c} />
    ))}
  </PlotSvg>
)

const tickXs = [15, ...Array.from({ length: 25 }, (_, i) => 152 + i * 68)]

const dateLabels = ['8/29', '9/01', '9/05', '9/06', '9/08', '9/12', '9/14', '9/18', '9/20', '9/22', '9/26', '9/28', '9/29', '10/03', '10/05', '10/09', '10/11', '10/13', '10/17', '10/19', '10/23', '10/24', '10/26', '10/30', '11/01', '14:00']

const tabs: [string, number][] = [
  ['STOX C164', 91], ['STOX C55', 85], ['STOX  C30', 87], ['STOX  8 Giorni', 109], ['STOX 4 giorni', 100],
  ['FTSEMIB C164', 109], ['FTSEMIB C55', 103], ['FTSEMIB C30', 105], ['FTSEMIB  8 Giorni', 126], ['FTSEMIB  4 giorni', 123],
  ['STOXX-FTSEMIB sito', 141], ['PERCENTUALE', 111], ['STOX vs BUND', 118], ['FIB vs BUND', 97], ['C164_3_Int', 94],
]

const statusCells: [string, number, string?][] = [
  ['Open Psns:', 90], ['DT BP:', 62], ['Purch Pwr:', 86], ['Closed P/L:', 94], ['RT TE:', 60], ['Open P/L:', 85],
  ['ORDER BAR', 89, '#008000'], ['MACROS', 69, '#008000'],
]

const MinGlyph = () => <svg width="12" height="12" viewBox="0 0 12 12"><path d="M2 8h7" stroke="#6f8296" strokeWidth="2" /></svg>
const RestoreGlyph = () => <svg width="12" height="12" viewBox="0 0 12 12" fill="none" stroke="#6f8296" strokeWidth="1.3"><path d="M2 5h6v6H2zM4 3h6v5" /></svg>
const CloseGlyph = () => <svg width="12" height="12" viewBox="0 0 12 12"><path d="M2 2l8 8M10 2l-8 8" stroke="#6f8296" strokeWidth="2" /></svg>

const TabNavIcon = ({ d }: { d: string }) => (
  <svg width="8" height="10" viewBox="0 0 8 10"><path d={d} fill="#777" /></svg>
)

const App: React.FC = () => (
  <Page>
    <GlobalStyle />
    <TitleBar>
      <svg width="15" height="24" viewBox="0 0 15 24">
        <path d="M2 22C1 14 3 6 9 2c3 2 5 8 4 14-2-3-3-7-4-9-2 3-4 8-7 15z" fill="#2a78d8" stroke="#0e3f88" strokeWidth=".6" />
      </svg>
      <TitleText>TradeStation 8.1 - STOXX_FTSEMIB - FTSEMIB  8 Giorni - [Chart Analysis - GS:FTSEMIB  60 min  [MCEDB] SPMIB FUTURES]</TitleText>
      <WinButtons>
        <WinButton $w={37}>
          <svg width="18" height="8" viewBox="0 0 18 8"><rect x="1" y="1" width="15" height="5" fill="#fff" stroke="#456" /></svg>
        </WinButton>
        <WinButton $w={36}>
          <svg width="20" height="18" viewBox="0 0 20 18" fill="none" stroke="#fff" strokeWidth="1.6">
            <path d="M6 3V1h13v11h-2" />
            <path d="M2 4h14v12H2z" />
            <path d="M6 8h6v4H6z" stroke="#345" />
          </svg>
        </WinButton>
        <WinButton $w={63} $close>
          <svg width="20" height="18" viewBox="0 0 20 18">
            <path d="M3 2l14 14M17 2L3 16" stroke="#456" strokeWidth="6" />
            <path d="M3 2l14 14M17 2L3 16" stroke="#fff" strokeWidth="4" />
          </svg>
        </WinButton>
      </WinButtons>
    </TitleBar>

    <MenuBar>
      <svg width="18" height="18" viewBox="0 0 18 18">
        <rect width="18" height="18" fill="#0d2a2a" />
        <path d="M1 13l3-3 2 2 3-7 2 4 3-5 3 3" stroke="#2fe05a" fill="none" />
        <path d="M1 16h16" stroke="#c22" />
      </svg>
      <MenuItem $ml={8}>File</MenuItem>
      <MenuItem $ml={14}>Edit</MenuItem>
      <MenuItem $ml={15}>View</MenuItem>
      <MenuItem $ml={13}>Insert</MenuItem>
      <MenuItem $ml={14}>Format</MenuItem>
      <MenuItem $ml={14}>Drawing</MenuItem>
      <MenuItem $ml={15}>Window</MenuItem>
      <MenuItem $ml={15}>Help</MenuItem>
      <MdiButtons>
        <MdiButton><MinGlyph /></MdiButton>
        <MdiButton><RestoreGlyph /></MdiButton>
        <MdiButton><CloseGlyph /></MdiButton>
      </MdiButtons>
    </MenuBar>

    <Toolbar>
      <Tools names={['doc', 'open', 'saveAll', 'props', 'box']} />
      <ToolSep />
      <Tools names={['preview', 'print']} />
      <ToolSep />
      <Tools names={['winA', 'winB', 'lock', 'dish', 'cubes']} />
      <ToolSep />
      <Combo><ComboCaret /><ComboArrow /></Combo>
      <SideArrow />
      <Tools names={['search']} />
      <Grip $ml={80} />
      {toolbarGroups.map((g, i) => (
        <React.Fragment key={i}>
          <Tools names={g} />
          {i < toolbarGroups.length - 1 && <ToolSep />}
        </React.Fragment>
      ))}
      <Grip $ml={16} />
      <Tools names={['fork', 'vlines', 'hlines', 'calc', 'arcs', 'fan', 'fib', 'vfib', 'gannFan', 'hArrow', 'parallel', 'fanBell', 'pencil']} />
      <ToolSep />
      <Tools names={['curve', 'redDown', 'blueUp', 'circle', 'square', 'abc']} />
    </Toolbar>

    <ChartWindow>
      <Pane $h={469}>
        <Plot>
          <PricePlot />
          <LeftEdge />
          <LegendRow items={priceLegend} top={1} />
          <AlertLevel>28710.000</AlertLevel>
        </Plot>
        <Axis>
          <AxisLabel $y={97}>29000</AxisLabel>
          <AxisLabel $y={190}>28500</AxisLabel>
          <AxisLabel $y={283}>28000</AxisLabel>
          <AxisLabel $y={376}>27500</AxisLabel>
          <AxisLabel $y={292} $bg="#6666ff">27960</AxisLabel>
          <AxisLabel $y={412} $bg="#00ff00">27319</AxisLabel>
        </Axis>
        <ChartMdi>
          <MdiButton><MinGlyph /></MdiButton>
          <MdiButton><RestoreGlyph /></MdiButton>
          <MdiButton><CloseGlyph /></MdiButton>
        </ChartMdi>
      </Pane>

      <Pane $h={216}>
        <Plot>
          <MacdPlot />
          <LeftEdge />
          <LegendRow items={macdLegend} top={0} />
        </Plot>
        <Axis $top>
          <AxisLabel $y={37}>6.00</AxisLabel>
          <AxisLabel $y={88}>2.00</AxisLabel>
          <AxisLabel $y={129}>-2.00</AxisLabel>
          <AxisLabel $y={172}>-6.00</AxisLabel>
          <AxisLabel $y={25} $bg="#ff0000">8.00</AxisLabel>
          <AxisLabel $y={50} $bg="#00ffff">5.64</AxisLabel>
          <AxisLabel $y={70} $bg="#666600" $h={17}>4.00</AxisLabel>
          <AxisLabel $y={109} $bg="#0000ff">0.00</AxisLabel>
          <AxisLabel $y={151} $bg="#666600">-4.00</AxisLabel>
          <AxisLabel $y={194} $bg="#ff0000">-8.00</AxisLabel>
        </Axis>
      </Pane>

      <Pane $h={216}>
        <Plot>
          <CciPlot />
          <LeftEdge />
          <LegendRow items={cciLegend} top={0} />
        </Plot>
        <Axis $top>
          <AxisLabel $y={28}>150.00</AxisLabel>
          <AxisLabel $y={80}>50.00</AxisLabel>
          <AxisLabel $y={106} />
          <AxisLabel $y={132}>-50.00</AxisLabel>
          <AxisLabel $y={157} />
          <AxisLabel $y={184}>-150.00</AxisLabel>
          <AxisLabel $y={55} $bg="#808080" $h={4} />
          <AxisLabel $y={42} $bg="#ff0000">127.38</AxisLabel>
          <AxisLabel $y={170} $bg="#808080">-120.00</AxisLabel>
        </Axis>
      </Pane>

      <DateAxis>
        <DateTicks viewBox="0 0 1920 10">
          {tickXs.map((x) => (
            <line key={x} x1={x} x2={x} y1="0" y2="4" stroke="#fff" />
          ))}
          <line x1="39.3" x2="39.3" y1="0" y2="9" stroke="#fff" />
        </DateTicks>
        {dateLabels.map((d) => (
          <DateLabel key={d}>{d}</DateLabel>
        ))}
      </DateAxis>
    </ChartWindow>

    <ScrollBar>
      <ScrollArrow $dir="left" />
      <ScrollThumb />
      <ScrollArrow $dir="right" />
    </ScrollBar>

    <TabStrip>
      <TabNavBtn><TabNavIcon d="M1 1v8h1V1zM7 1L3 5l4 4z" /></TabNavBtn>
      <TabNavBtn><TabNavIcon d="M6 1L2 5l4 4z" /></TabNavBtn>
      <TabNavBtn><TabNavIcon d="M2 1l4 4-4 4z" /></TabNavBtn>
      <TabNavBtn><TabNavIcon d="M7 1v8H6V1zM1 1l4 4-4 4z" /></TabNavBtn>
      <TabSpacer />
      {tabs.map(([t, w]) => (
        <Tab key={t} $w={w} $active={t === 'FTSEMIB  8 Giorni'}>
          <TabText $active={t === 'FTSEMIB  8 Giorni'}>{t}</TabText>
        </Tab>
      ))}
    </TabStrip>

    <StatusBar>
      <StatusHelp>For Help, press F1</StatusHelp>
      <StatusCell $w={54}>Acct:</StatusCell>
      {statusCells.map(([t, w, c]) => (
        <StatusCell key={t} $w={w} $c={c}>{t}</StatusCell>
      ))}
      <StatusBall />
      <StatusCell $w={124}>01/11/2023 14:29</StatusCell>
    </StatusBar>
  </Page>
)

export default App
